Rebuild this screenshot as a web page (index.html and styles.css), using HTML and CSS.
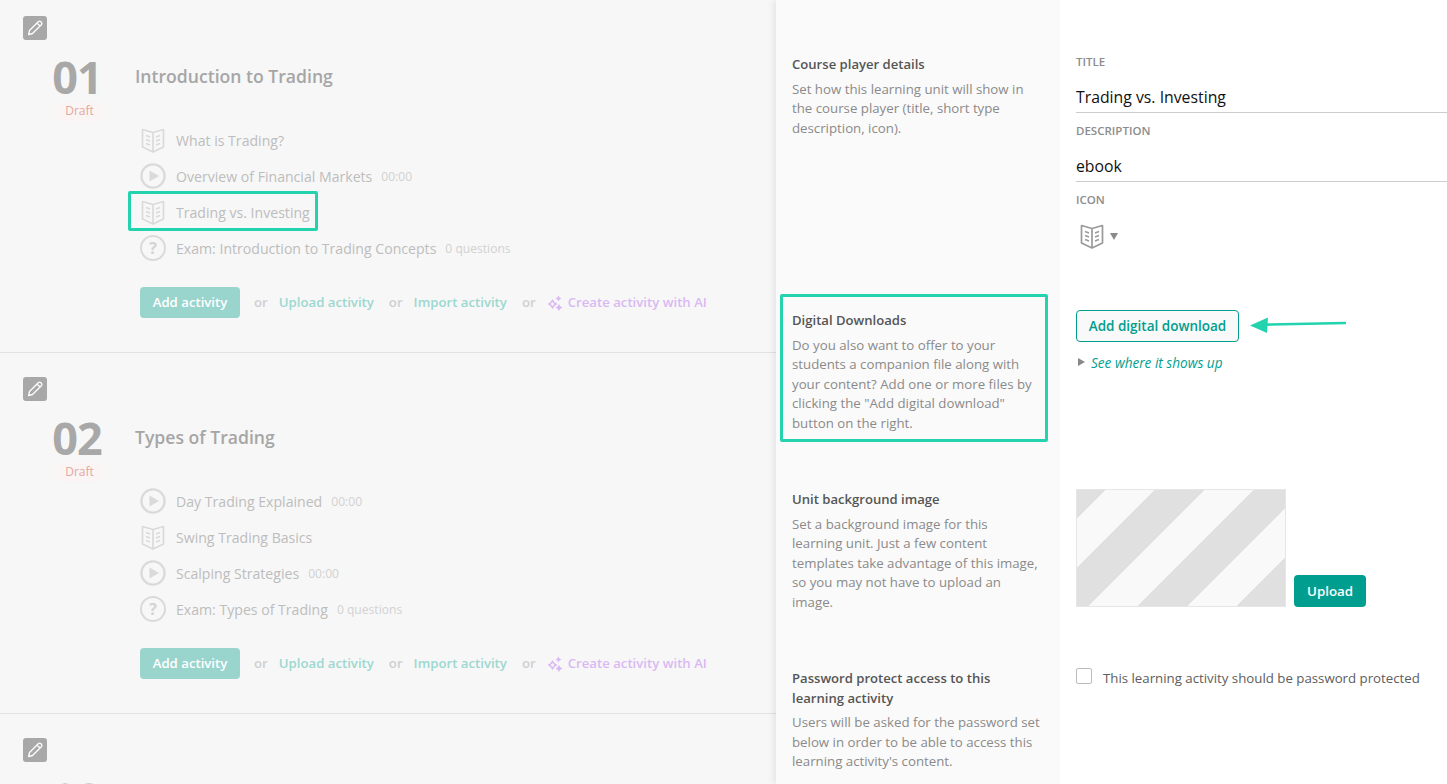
FILE: index.html
```html
<!DOCTYPE html>
<html lang="en">
<head>
<meta charset="utf-8">
<title>Course editor</title>
<link rel="stylesheet" href="styles.css">
</head>
<body>
<svg class="defs" width="0" height="0" aria-hidden="true">
  <symbol id="book" viewBox="0 0 26 26">
    <path d="M2.5 2.5 L13 5.5 L23.5 2.5 V20 L13 25 L2.5 20 Z M13 5.5 V25" fill="none" stroke="currentColor" stroke-width="1.7" stroke-linejoin="round"/>
    <path d="M6 8.5 L10 10 M6 12.5 L10 14 M6 16.5 L10 18 M20 8.5 L16 10 M20 12.5 L16 14 M20 16.5 L16 18" fill="none" stroke="currentColor" stroke-width="1.4"/>
  </symbol>
  <symbol id="play" viewBox="0 0 26 26">
    <circle cx="13" cy="13" r="11.6" fill="none" stroke="currentColor" stroke-width="2.3"/>
    <path d="M9.5 7.5 L19 13 L9.5 18.5 Z" fill="currentColor"/>
  </symbol>
  <symbol id="pencil" viewBox="0 0 24 24">
    <path d="M6.5 14.5 L15.5 5.5 Q16.5 4.8 17.6 5.5 L18.6 6.5 Q19.3 7.5 18.6 8.5 L9.5 17.5 L5.6 18.6 Z M14 7 L17 10" fill="none" stroke="#fff" stroke-width="1.3" stroke-linejoin="round"/>
  </symbol>
  <symbol id="sparkle" viewBox="0 0 16 16">
    <path d="M5.5 4 L7.4 7.1 L10.5 9 L7.4 10.9 L5.5 14 L3.6 10.9 L0.5 9 L3.6 7.1 Z M5.5 7 L3.6 9 L5.5 11 L7.4 9 Z" fill="currentColor" fill-rule="evenodd"/>
    <path d="M11.5 0.5 L12.5 2.5 L14.5 3.5 L12.5 4.5 L11.5 6.5 L10.5 4.5 L8.5 3.5 L10.5 2.5 Z M12 9 L13.3 11.2 L15.5 12.5 L13.3 13.8 L12 16 L10.7 13.8 L8.5 12.5 L10.7 11.2 Z" fill="currentColor"/>
  </symbol>
</svg>

<main class="page">
  <div class="outline">
    <section class="module">
      <button class="edit"><svg class="edit-icon"><use href="#pencil"/></svg></button>
      <div class="head">
        <div class="num"><div class="digits">01</div><div class="draft">Draft</div></div>
        <h2 class="mod-title">Introduction to Trading</h2>
      </div>
      <ul class="units">
        <li class="unit"><svg class="u-icon"><use href="#book"/></svg><span>What is Trading?</span></li>
        <li class="unit"><svg class="u-icon"><use href="#play"/></svg><span>Overview of Financial Markets</span><small>00:00</small></li>
        <li class="unit"><svg class="u-icon"><use href="#book"/></svg><span>Trading vs. Investing</span><div class="mark mark-unit"></div></li>
        <li class="unit"><span class="q-icon">?</span><span>Exam: Introduction to Trading Concepts</span><small>0 questions</small></li>
      </ul>
      <div class="actions">
        <button class="add">Add activity</button>
        <span class="or">or</span><a class="act">Upload activity</a>
        <span class="or">or</span><a class="act">Import activity</a>
        <span class="or">or</span><a class="ai"><svg class="spark"><use href="#sparkle"/></svg>Create activity with AI</a>
      </div>
    </section>

    <section class="module">
      <button class="edit"><svg class="edit-icon"><use href="#pencil"/></svg></button>
      <div class="head">
        <div class="num"><div class="digits">02</div><div class="draft">Draft</div></div>
        <h2 class="mod-title">Types of Trading</h2>
      </div>
      <ul class="units">
        <li class="unit"><svg class="u-icon"><use href="#play"/></svg><span>Day Trading Explained</span><small>00:00</small></li>
        <li class="unit"><svg class="u-icon"><use href="#book"/></svg><span>Swing Trading Basics</span></li>
        <li class="unit"><svg class="u-icon"><use href="#play"/></svg><span>Scalping Strategies</span><small>00:00</small></li>
        <li class="unit"><span class="q-icon">?</span><span>Exam: Types of Trading</span><small>0 questions</small></li>
      </ul>
      <div class="actions">
        <button class="add">Add activity</button>
        <span class="or">or</span><a class="act">Upload activity</a>
        <span class="or">or</span><a class="act">Import activity</a>
        <span class="or">or</span><a class="ai"><svg class="spark"><use href="#sparkle"/></svg>Create activity with AI</a>
      </div>
    </section>

    <section class="module">
      <button class="edit"><svg class="edit-icon"><use href="#pencil"/></svg></button>
      <div class="head">
        <div class="num"><div class="digits">03</div></div>
      </div>
    </section>
  </div>

  <aside class="settings">
    <div class="info info-first">
      <h3>Course player details</h3>
      <p>Set how this learning unit will show in the course player (title, short type description, icon).</p>
    </div>
    <div class="field field-first">
      <label class="lbl">TITLE</label>
      <input class="txt" value="Trading vs. Investing">
      <label class="lbl lbl-next">DESCRIPTION</label>
      <input class="txt" value="ebook">
      <label class="lbl lbl-next">ICON</label>
      <div class="picker"><svg class="pick-icon"><use href="#book"/></svg><span class="caret"></span></div>
    </div>

    <div class="info info-mark">
      <h3>Digital Downloads</h3>
      <p>Do you also want to offer to your students a companion file along with your content? Add one or more files by clicking the "Add digital download" button on the right.</p>
      <div class="mark mark-info"></div>
    </div>
    <div class="field field-dl">
      <button class="outline-btn">Add digital download</button>
      <svg class="arrow" viewBox="0 0 96 18"><path d="M17 8.6 L95 7" stroke="#22d3ae" stroke-width="2.6" stroke-linecap="round" fill="none"/><path d="M0 9.4 L18 1.5 L17 17 Z" fill="#22d3ae"/></svg>
      <div class="see"><span class="tri"></span><em>See where it shows up</em></div>
    </div>

    <div class="info">
      <h3>Unit background image</h3>
      <p>Set a background image for this learning unit. Just a few content templates take advantage of this image, so you may not have to upload an image.</p>
    </div>
    <div class="field upload-row">
      <div class="stripes"></div>
      <button class="upload">Upload</button>
    </div>

    <div class="info">
      <h3>Password protect access to this learning activity</h3>
      <p>Users will be asked for the password set below in order to be able to access this learning activity's content.</p>
    </div>
    <div class="field">
      <label class="check"><input type="checkbox" class="box"><span>This learning activity should be password protected</span></label>
    </div>
  </aside>
</main>
</body>
</html>
```
FILE: styles.css
```css
* { box-sizing: border-box; }
html, body { margin: 0; height: 784px; overflow: hidden; }
body { font-family: "Open Sans", "Liberation Sans", sans-serif; background: #f7f7f7; }
.defs { position: absolute; }
.page { display: flex; height: 784px; overflow: hidden; }

.outline { width: 776px; flex: none; background: #f7f7f7; }
.module { padding: 24px 0 34px 23px; border-bottom: 1px solid #e2e2e2; }
.module:first-child { padding-top: 16px; }
.module:last-child { border-bottom: 0; }
.edit { display: block; width: 24px; height: 24px; padding: 0; border: 0; border-radius: 3px; background: #a8a8a8; }
.edit-icon { display: block; width: 24px; height: 24px; }
.head { display: flex; align-items: flex-start; height: 82px; margin-left: 28px; }
.num { width: 52px; display: flex; flex-direction: column; align-items: center; }
.digits { font-size: 45px; font-weight: 700; line-height: 50px; letter-spacing: -1px; color: #a8a8a8; margin-top: 12px; }
.draft { font-size: 12px; line-height: 17px; color: #e5a6a0; padding: 0 7px 2px; background: #faf5f4; margin-left: 5px; }
.mod-title { margin: 23px 0 0 32px; font-size: 17.6px; line-height: 26px; font-weight: 600; color: #a6a6a6; }

.units { list-style: none; margin: 0 0 0 117px; padding: 0; }
.unit { position: relative; display: flex; align-items: center; height: 36px; font-size: 14.1px; color: #bdbdbd; }
.unit small { margin-left: 9px; font-size: 12.1px; color: #d2d2d2; }
.u-icon { width: 26px; height: 26px; margin-right: 10px; color: #dadada; flex: none; }
.q-icon { width: 26px; height: 26px; margin-right: 10px; flex: none; border: 2.3px solid #dadada; border-radius: 50%; display: flex; align-items: center; justify-content: center; font-size: 16px; font-weight: 700; color: #d4d4d4; }
.mark { position: absolute; border: 3px solid #22d3ae; border-radius: 2px; }
.mark-unit { left: -12px; top: -3px; width: 190px; height: 40px; }

.actions { display: flex; align-items: center; height: 32px; margin: 20px 0 0 117px; font-size: 13.2px; font-weight: 600; }
.add { width: 100px; height: 31px; padding: 0; border: 0; border-radius: 4px; background: #99d5cd; color: #fff; font: inherit; margin-right: 14px; }
.or { color: #cfcfcf; margin-right: 11px; }
.act { color: #9cd8d0; margin-right: 15px; }
.ai { color: #dab9f3; display: flex; align-items: center; }
.spark { width: 16px; height: 16px; margin: 2px 5px 0 0; color: #d9b8f3; }

.settings { flex: 1; display: grid; grid-template-columns: 284px 1fr; grid-template-rows: 310px 179px 179px auto; background: #fff; box-shadow: -3px 0 6px rgba(0, 0, 0, .07); position: relative; font-size: 13.25px; }
.info { position: relative; padding: 1px 19px 0 16px; background: #fafafa; }
.info-first { padding-top: 55px; }
.info h3 { margin: 0 0 5px; font-size: 13.1px; line-height: 19.5px; font-weight: 600; color: #555; }
.info p { margin: 0; line-height: 19.5px; color: #8a8a8a; }
.mark-info { left: 4px; top: -16px; width: 268px; height: 148px; }

.field { position: relative; padding-left: 16px; }
.field-first { padding-top: 54px; }
.lbl { display: block; font-size: 11.5px; line-height: 16px; font-weight: 600; color: #8c8c8c; }
.lbl-next { margin-top: 10px; }
.txt { display: block; width: 100%; height: 43px; padding: 15px 0 3px; border: 0; border-bottom: 1px solid #ccc; border-radius: 0; background: transparent; font: 15.8px/24px "Open Sans", sans-serif; color: #111; outline: 0; }
.picker { display: flex; align-items: center; margin: 15px 0 0 3px; }
.pick-icon { width: 26px; height: 26px; color: #9a9a9a; }
.caret { width: 0; height: 0; margin-left: 5px; border: 4px solid transparent; border-top: 7px solid #8a8a8a; border-bottom: 0; }

.outline-btn { display: block; width: 163px; height: 32px; padding: 0; border: 1px solid #009e8f; border-radius: 4px; background: #f9f9f9; color: #009e8f; font: 600 13.5px "Open Sans", sans-serif; }
.arrow { position: absolute; left: 190px; top: 6px; width: 96px; height: 18px; }
.see { display: flex; align-items: center; height: 20px; margin-top: 10px; font-size: 13.6px; color: #009e8f; }
.tri { width: 0; height: 0; margin: 0 6px 0 2px; border: 4px solid transparent; border-left: 7px solid #888; border-right: 0; }

.upload-row { display: flex; align-items: flex-end; gap: 8px; height: 118px; }
.stripes { width: 210px; height: 118px; border: 1px solid #e6e6e6; background: repeating-linear-gradient(135deg, #e0e0e0 -15px, #e0e0e0 20px, #f9f9f9 20px, #f9f9f9 55px); }
.upload { width: 72px; height: 32px; padding: 0; border: 0; border-radius: 4px; background: #009e8f; color: #fff; font: 600 13.3px "Open Sans", sans-serif; }

.check { display: flex; align-items: center; color: #5d5d5d; font-size: 13.25px; line-height: 20px; }
.box { appearance: none; width: 16px; height: 16px; margin: -4px 11px 0 0; border: 1px solid #bbb; border-radius: 2px; background: #fff; flex: none; }
```
